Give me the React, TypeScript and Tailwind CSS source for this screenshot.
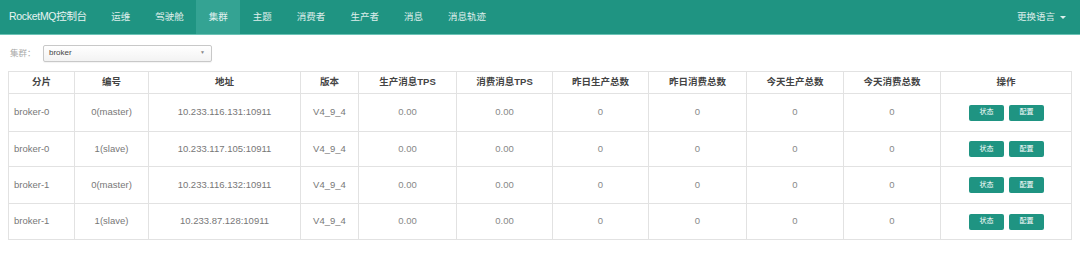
import React from "react";

const navItems = ["运维", "驾驶舱", "集群", "主题", "消费者", "生产者", "消息", "消息轨迹"];
const headers = ["分片", "编号", "地址", "版本", "生产消息TPS", "消费消息TPS", "昨日生产总数", "昨日消费总数", "今天生产总数", "今天消费总数", "操作"];
const widths = [66, 74, 152, 58, 98, 96, 96, 98, 97, 97, 131];
const rows = [
  ["broker-0", "0(master)", "10.233.116.131:10911", "V4_9_4"],
  ["broker-0", "1(slave)", "10.233.117.105:10911", "V4_9_4"],
  ["broker-1", "0(master)", "10.233.116.132:10911", "V4_9_4"],
  ["broker-1", "1(slave)", "10.233.87.128:10911", "V4_9_4"],
];
const heights = [38, 35, 37, 36];

export default function App() {
  return (
    <div
      className="w-[1080px] h-[253px] bg-white overflow-hidden"
      style={{ fontFamily: '"Liberation Sans", "Noto Sans CJK SC", sans-serif' }}
    >
      <div className="h-[35px] bg-[#1f9482] border-b border-[#6cc3b6] flex items-stretch">
        <div className="pl-[9px] pr-[12px] flex items-center text-[10.5px] tracking-[-0.3px] text-white/90">RocketMQ控制台</div>
        <div className="flex items-stretch">
          {navItems.map((n) => (
            <div
              key={n}
              className={`px-[12.5px] flex items-center text-[9.5px] text-white/85 ${n === "集群" ? "bg-[#34a393]" : ""}`}
            >
              {n}
            </div>
          ))}
        </div>
        <div className="ml-auto pr-[14px] flex items-center gap-[5px] text-[9.5px] text-white/85">
          <span>更换语言</span>
          <span className="w-0 h-0 border-l-[3px] border-r-[3px] border-t-[3px] border-l-transparent border-r-transparent border-t-white/85"></span>
        </div>
      </div>

      <div className="flex items-center h-[27px] pt-[9px] pl-[10px]">
        <span className="text-[8.5px] text-[#aaa] w-[33px]">集群：</span>
        <div className="w-[169px] h-[17px] border border-[#c8c8c8] rounded-[2px] bg-gradient-to-b from-white to-[#f3f3f3] flex items-center pl-[5px] pr-[6px] shadow-[0_1px_1px_rgba(0,0,0,0.05)]">
          <span className="text-[8px] text-[#444]">broker</span>
          <span className="ml-auto text-[5px] text-[#888]">▼</span>
        </div>
      </div>

      <div className="pl-[8px] pt-[9px]">
        <table className="table-fixed border-collapse w-[1063px] text-[9.5px]">
          <colgroup>
            {widths.map((w, i) => (
              <col key={i} style={{ width: w }} />
            ))}
          </colgroup>
          <thead>
            <tr className="h-[22px]">
              {headers.map((h) => (
                <th key={h} className="border border-[#e2e2e2] font-semibold text-[#444] text-center p-0 text-[9.5px]">
                  {h}
                </th>
              ))}
            </tr>
          </thead>
          <tbody>
            {rows.map((r, ri) => (
              <tr key={ri} style={{ height: heights[ri] }}>
                <td className="border border-[#e2e2e2] text-[#777] pl-[5px] text-left">{r[0]}</td>
                <td className="border border-[#e2e2e2] text-[#777] text-center">{r[1]}</td>
                <td className="border border-[#e2e2e2] text-[#777] text-center">{r[2]}</td>
                <td className="border border-[#e2e2e2] text-[#777] text-center">{r[3]}</td>
                <td className="border border-[#e2e2e2] text-[#888] text-center">0.00</td>
                <td className="border border-[#e2e2e2] text-[#888] text-center">0.00</td>
                <td className="border border-[#e2e2e2] text-[#888] text-center">0</td>
                <td className="border border-[#e2e2e2] text-[#888] text-center">0</td>
                <td className="border border-[#e2e2e2] text-[#888] text-center">0</td>
                <td className="border border-[#e2e2e2] text-[#888] text-center">0</td>
                <td className="border border-[#e2e2e2] text-center">
                  <div className="flex justify-center gap-[5px] pl-[1px]">
                    <span className="w-[35px] h-[16px] bg-[#1f9482] rounded-[2px] text-white text-[7px] flex items-center justify-center">状态</span>
                    <span className="w-[35px] h-[16px] bg-[#1f9482] rounded-[2px] text-white text-[7px] flex items-center justify-center">配置</span>
                  </div>
                </td>
              </tr>
            ))}
          </tbody>
        </table>
      </div>
    </div>
  );
}
